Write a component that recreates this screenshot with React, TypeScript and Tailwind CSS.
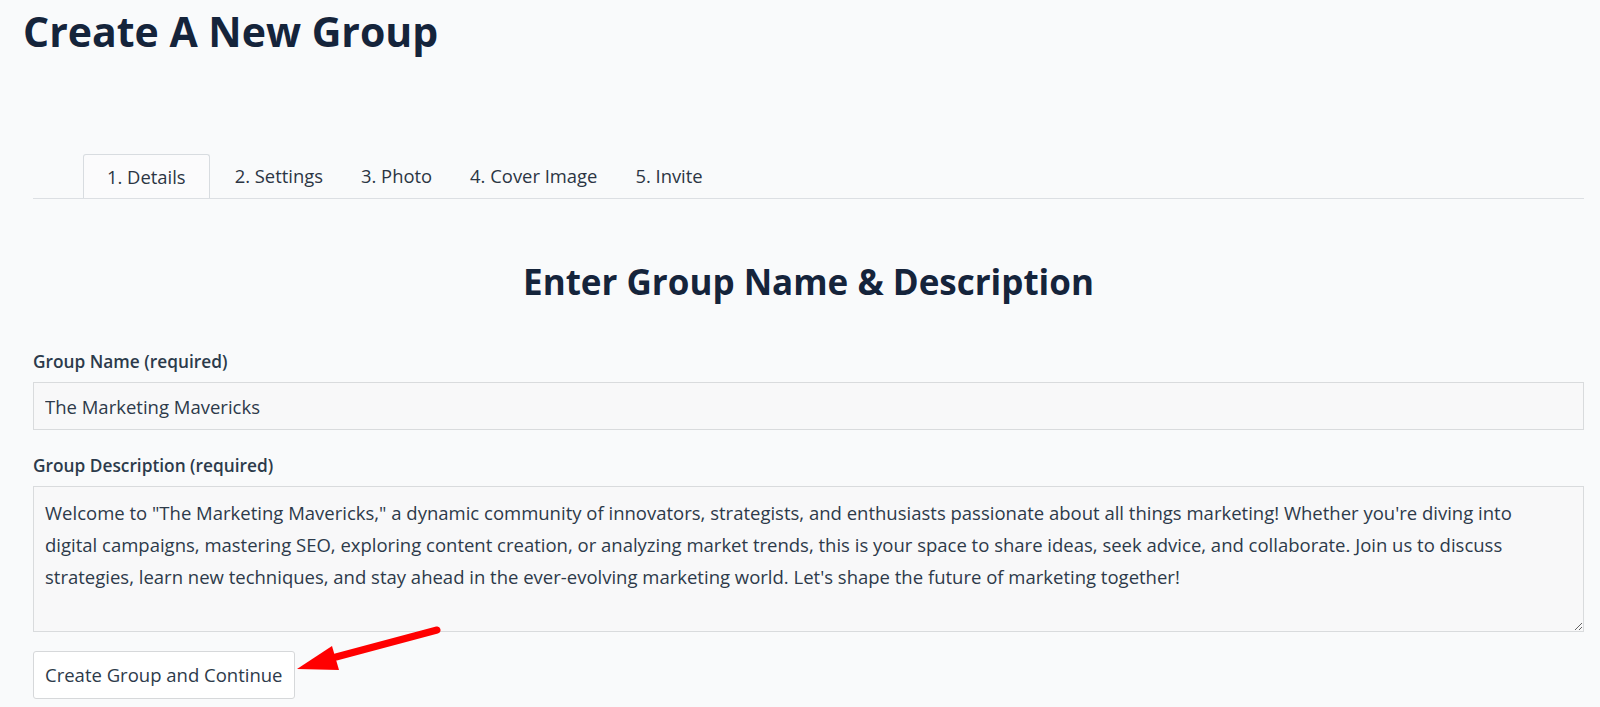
import React from "react";

const desc = [
  'Welcome to "The Marketing Mavericks," a dynamic community of innovators, strategists, and enthusiasts passionate about all things marketing! Whether you\'re diving into',
  "digital campaigns, mastering SEO, exploring content creation, or analyzing market trends, this is your space to share ideas, seek advice, and collaborate. Join us to discuss",
  "strategies, learn new techniques, and stay ahead in the ever-evolving marketing world. Let's shape the future of marketing together!",
].join("\n");

export default function App() {
  return (
    <div className="relative min-h-screen bg-[#f9fafb] font-['Open_Sans',sans-serif] text-[#2d3a4a]">
      <div className="pl-[23px] pt-[7px]">
        <h1 className="text-[41px] leading-[48px] font-bold text-[#15243b]">Create A New Group</h1>
      </div>

      <div className="pl-[33px] pr-[16px]">
        <div className="mt-[99px] flex border-b border-[#dcdfe3] pl-[50px] text-[18.4px] text-[#2b3543]">
          <div className="mr-[6px] flex h-[44px] items-center rounded-t-[3px] border border-b-0 border-[#d8dce0] bg-[#fbfbfc] px-[23px]">
            1. Details
          </div>
          <div className="flex h-[44px] items-center px-[19px]">2. Settings</div>
          <div className="flex h-[44px] items-center px-[19px]">3. Photo</div>
          <div className="flex h-[44px] items-center px-[19px]">4. Cover Image</div>
          <div className="flex h-[44px] items-center px-[19px]">5. Invite</div>
        </div>

        <h2 className="mt-[59px] text-center text-[35px] leading-[48px] font-bold text-[#15243b]">
          Enter Group Name &amp; Description
        </h2>

        <label className="mt-[44px] block text-[17.3px] leading-[24px] font-semibold text-[#2c3a4b]">
          Group Name (required)
        </label>
        <input
          className="mt-[8px] block h-[48px] w-full border border-[#d9dbdd] bg-[#f8f8f9] px-[11px] text-[18.5px] text-[#2d3a4a] outline-none"
          defaultValue="The Marketing Mavericks"
        />

        <label className="mt-[24px] block text-[17.3px] leading-[24px] font-semibold text-[#2c3a4b]">
          Group Description (required)
        </label>
        <textarea
          className="mt-[8px] block h-[146px] w-full overflow-hidden border border-[#d9dbdd] bg-[#f8f8f9] px-[11px] py-[10px] text-[18.5px] leading-[32px] text-[#2d3a4a] outline-none"
          wrap="off"
          defaultValue={desc}
        />

        <button className="mt-[19px] block h-[48px] rounded-[3px] border border-[#d6d8da] bg-white px-[11px] text-[18.5px] text-[#2d3a4a]">
          Create Group and Continue
        </button>
      </div>

      <svg
        className="pointer-events-none absolute left-0 top-0"
        width="1600"
        height="707"
        viewBox="0 0 1600 707"
      >
        <path d="M437 630 L336 657" stroke="#ff0000" strokeWidth="7" strokeLinecap="round" />
        <polygon points="297,669 332,646 339,670" fill="#ff0000" />
      </svg>
    </div>
  );
}
